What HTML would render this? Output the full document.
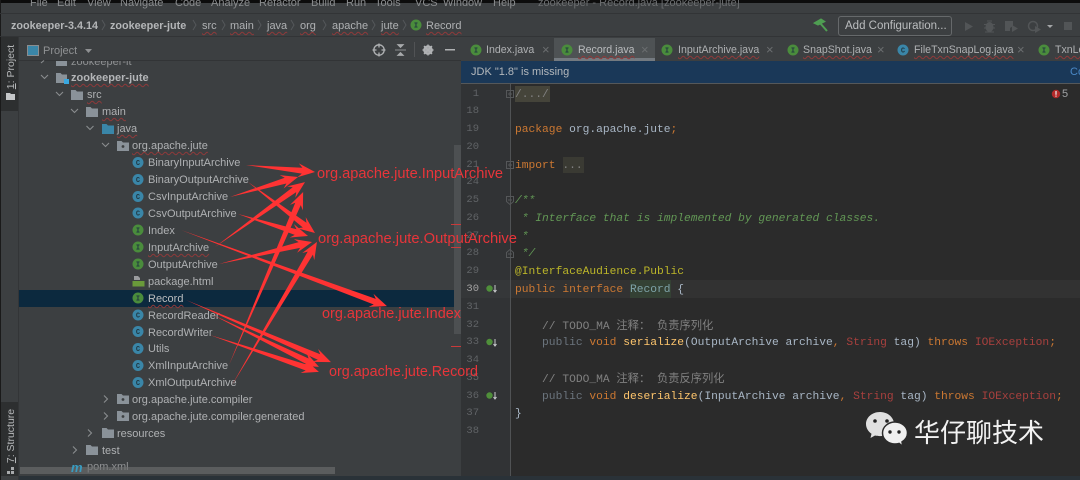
<!DOCTYPE html>
<html lang="zh">
<head>
<meta charset="utf-8">
<title>Record.java</title>
<style>
html,body{margin:0;padding:0;width:1080px;height:480px;overflow:hidden;background:#3c3f41}
#r{position:relative;width:1080px;height:480px;overflow:hidden;background:#3c3f41;font-family:"Liberation Sans","Noto Sans CJK SC",sans-serif;font-size:11px;color:#afb1b3;filter:blur(.35px)}
.b{position:absolute}
.t{position:absolute;white-space:nowrap;line-height:16px;height:16px;margin-top:1px}
.w{text-decoration:underline wavy #8f3a3a 1px;text-underline-offset:2px}
.bd{font-weight:bold}
.m{position:absolute;white-space:pre;line-height:18px;height:18px;left:515px;margin-top:1px;font-family:"Liberation Mono","Noto Sans CJK SC",monospace;font-size:11.27px;color:#a9b7c6}
.n{position:absolute;left:462px;width:17px;text-align:right;line-height:16px;font-family:"Liberation Mono",monospace;font-size:10.5px;color:#606366}
.k{color:#cc7832}.d{color:#6b747d}.h{color:#808080}.j{color:#629755;font-style:italic}.e{color:#a8403e}.f{color:#ffc66d}.a{color:#bbb529}
svg{position:absolute;left:0;top:0}
.c{fill:#3a86a8}.i{fill:#4a8c3c}
.l{font:bold 7px "Liberation Mono",monospace;text-anchor:middle;fill:#1f3640}
.ch{fill:none;stroke:#8a8d8f;stroke-width:1.1}
.cb{fill:none;stroke:#55585a;stroke-width:1}
.fo{fill:#8a9299}
.ar{fill:#ff3333}
.lb{font-family:"Liberation Sans",sans-serif;font-size:14.5px;fill:#e8353a}
.g{fill:#525557}
.x{position:absolute;font-size:13px;line-height:16px;color:#6b6e70;margin-top:1px}
.tb{font-size:10.6px}
</style>
</head>
<body>
<div id="r">
  <!-- first tree row is clipped by the tool header -->
  <div class="t" style="left:71px;top:53px;color:#8f9193">zookeeper-it</div>
  <div class="b" style="left:19px;top:37px;width:442px;height:23px;background:#3c3f41"></div>

  <!-- frame -->
  <div class="b" style="left:0;top:0;width:1080px;height:3px;background:#0c0c0c"></div>
  <div class="b" style="left:0;top:0;width:1px;height:480px;background:#1a1a1a"></div>
  <div class="b" style="left:0;top:13px;width:1080px;height:1px;background:#323436"></div>
  <div class="b" style="left:0;top:36px;width:1080px;height:1px;background:#323436"></div>

  <!-- menu -->
  <div class="t" style="left:30px;top:-6px;color:#8a8c8e">File</div>
  <div class="t" style="left:57px;top:-6px;color:#8a8c8e">Edit</div>
  <div class="t" style="left:87px;top:-6px;color:#8a8c8e">View</div>
  <div class="t" style="left:120px;top:-6px;color:#8a8c8e">Navigate</div>
  <div class="t" style="left:175px;top:-6px;color:#8a8c8e">Code</div>
  <div class="t" style="left:211px;top:-6px;color:#8a8c8e">Analyze</div>
  <div class="t" style="left:259px;top:-6px;color:#8a8c8e">Refactor</div>
  <div class="t" style="left:311px;top:-6px;color:#8a8c8e">Build</div>
  <div class="t" style="left:346px;top:-6px;color:#8a8c8e">Run</div>
  <div class="t" style="left:375px;top:-6px;color:#8a8c8e">Tools</div>
  <div class="t" style="left:415px;top:-6px;color:#8a8c8e">VCS</div>
  <div class="t" style="left:443px;top:-6px;color:#8a8c8e">Window</div>
  <div class="t" style="left:493px;top:-6px;color:#8a8c8e">Help</div>
  <div class="t" style="left:538px;top:-6px;color:#6c6e70">zookeeper - Record.java [zookeeper-jute]</div>

  <!-- breadcrumbs -->
  <div class="t bd" style="left:11px;top:17px;color:#b4b6b8;font-size:10.8px">zookeeper-3.4.14</div>
  <div class="t bd" style="left:110px;top:17px;color:#b4b6b8;font-size:10.8px">zookeeper-jute</div>
  <div class="t w" style="left:202px;top:17px">src</div>
  <div class="t w" style="left:230px;top:17px">main</div>
  <div class="t w" style="left:267px;top:17px">java</div>
  <div class="t w" style="left:300px;top:17px">org</div>
  <div class="t w" style="left:332px;top:17px">apache</div>
  <div class="t w" style="left:381px;top:17px">jute</div>
  <div class="t w" style="left:426px;top:17px">Record</div>

  <!-- add config -->
  <div class="b" style="left:838px;top:16px;width:112px;height:18px;border:1px solid #66696b;border-radius:3px"></div>
  <div class="t" style="left:845px;top:17px;color:#bbbdbf;font-size:11.5px">Add Configuration...</div>

  <!-- tool stripe -->
  <div class="b" style="left:1px;top:37px;width:17px;height:74px;background:#2d2f30"></div>
  <div class="b" style="left:1px;top:402px;width:17px;height:74px;background:#2d2f30"></div>
  <div class="b" style="left:18px;top:37px;width:1px;height:443px;background:#333537"></div>
  <div class="t" style="left:-14px;top:58px;width:50px;text-align:center;transform:rotate(-90deg);color:#b5b7b9;font-size:10.5px"><u>1</u>: Project</div>
  <div class="t" style="left:-19px;top:427px;width:60px;text-align:center;transform:rotate(-90deg);color:#b5b7b9;font-size:10.5px"><u>7</u>: Structure</div>

  <!-- tool header -->
  <div class="b" style="left:19px;top:60px;width:442px;height:1px;background:#323436"></div>
  <div class="t" style="left:43px;top:42px;color:#8f9193;font-size:11px">Project</div>

  <!-- selected row -->
  <div class="b" style="left:19px;top:290px;width:442px;height:17px;background:#0c293e"></div>

  <!-- tree text -->
  <div class="t bd w" style="left:71px;top:69px;color:#b4b6b8">zookeeper-jute</div>
  <div class="t w" style="left:87px;top:86px">src</div>
  <div class="t w" style="left:102px;top:103px">main</div>
  <div class="t w" style="left:117px;top:120px">java</div>
  <div class="t w" style="left:132px;top:137px">org.apache.jute</div>
  <div class="t" style="left:148px;top:154px">BinaryInputArchive</div>
  <div class="t" style="left:148px;top:171px">BinaryOutputArchive</div>
  <div class="t" style="left:148px;top:188px">CsvInputArchive</div>
  <div class="t" style="left:148px;top:205px">CsvOutputArchive</div>
  <div class="t" style="left:148px;top:222px">Index</div>
  <div class="t w" style="left:148px;top:239px">InputArchive</div>
  <div class="t" style="left:148px;top:256px">OutputArchive</div>
  <div class="t" style="left:148px;top:273px">package.html</div>
  <div class="t w" style="left:148px;top:290px;color:#bcbec0">Record</div>
  <div class="t" style="left:148px;top:307px">RecordReader</div>
  <div class="t" style="left:148px;top:324px">RecordWriter</div>
  <div class="t" style="left:148px;top:340px">Utils</div>
  <div class="t" style="left:148px;top:357px">XmlInputArchive</div>
  <div class="t" style="left:148px;top:374px">XmlOutputArchive</div>
  <div class="t" style="left:132px;top:391px">org.apache.jute.compiler</div>
  <div class="t" style="left:132px;top:408px">org.apache.jute.compiler.generated</div>
  <div class="t" style="left:117px;top:425px">resources</div>
  <div class="t" style="left:102px;top:442px">test</div>
  <div class="t" style="left:87px;top:458px;color:#8f9193">pom.xml</div>

  <!-- tabs -->
  <div class="b" style="left:461px;top:37px;width:619px;height:24px;background:#3c3f41"></div>
  <div class="b" style="left:554px;top:38px;width:101px;height:20px;background:#4e5254"></div>
  <div class="b" style="left:554px;top:58px;width:101px;height:3px;background:#747a80"></div>
  <div class="t tb" style="left:486px;top:41px">Index.java</div>
  <div class="x" style="left:542px;top:41px">×</div>
  <div class="t w tb" style="left:578px;top:41px;color:#bbbdbf">Record.java</div>
  <div class="x" style="left:641px;top:41px">×</div>
  <div class="t w tb" style="left:678px;top:41px">InputArchive.java</div>
  <div class="x" style="left:766px;top:41px">×</div>
  <div class="t w tb" style="left:803px;top:41px">SnapShot.java</div>
  <div class="x" style="left:877px;top:41px">×</div>
  <div class="t w tb" style="left:914px;top:41px">FileTxnSnapLog.java</div>
  <div class="x" style="left:1017px;top:41px">×</div>
  <div class="t w tb" style="left:1055px;top:41px">TxnLog.java</div>

  <!-- notification -->
  <div class="b" style="left:461px;top:61px;width:619px;height:22px;background:#1a3858"></div>
  <div class="b" style="left:461px;top:83px;width:619px;height:1px;background:#55585a"></div>
  <div class="t" style="left:471px;top:63px;color:#b4b8bc;font-size:11px">JDK "1.8" is missing</div>
  <div class="t" style="left:1070px;top:63px;color:#4a88c7;font-size:11px">Co</div>

  <!-- editor -->
  <div class="b" style="left:461px;top:84px;width:49px;height:392px;background:#313335"></div>
  <div class="b" style="left:510px;top:84px;width:1px;height:392px;background:#505254"></div>
  <div class="b" style="left:511px;top:84px;width:569px;height:392px;background:#2b2b2b"></div>
  <div class="b" style="left:511px;top:280px;width:569px;height:18px;background:#323232"></div>
  <div class="b" style="left:461px;top:280px;width:49px;height:18px;background:#353739"></div>
  <div class="b" style="left:515px;top:86px;width:35px;height:16px;background:#45443a"></div>
  <div class="b" style="left:563px;top:157px;width:21px;height:16px;background:#3a3a33"></div>
  <div class="b" style="left:630px;top:280px;width:41px;height:18px;background:#344134"></div>

  <!-- scrollbars -->
  <div class="b" style="left:454px;top:145px;width:7px;height:189px;background:#4d5052"></div>
  <div class="b" style="left:20px;top:467px;width:315px;height:7px;background:rgba(112,113,114,.6)"></div>
  <div class="b" style="left:19px;top:476px;width:1061px;height:4px;background:#2a3238"></div>

  <!-- line numbers -->
  <div class="n" style="top:86px">1</div>
  <div class="n" style="top:103px">18</div>
  <div class="n" style="top:121px">19</div>
  <div class="n" style="top:139px">20</div>
  <div class="n" style="top:157px">21</div>
  <div class="n" style="top:174px">24</div>
  <div class="n" style="top:192px">25</div>
  <div class="n" style="top:210px">26</div>
  <div class="n" style="top:228px">27</div>
  <div class="n" style="top:245px">28</div>
  <div class="n" style="top:263px">29</div>
  <div class="n" style="top:281px;color:#a4a3a3">30</div>
  <div class="n" style="top:299px">31</div>
  <div class="n" style="top:317px">32</div>
  <div class="n" style="top:334px">33</div>
  <div class="n" style="top:352px">34</div>
  <div class="n" style="top:370px">35</div>
  <div class="n" style="top:388px">36</div>
  <div class="n" style="top:405px">37</div>
  <div class="n" style="top:423px">38</div>

  <!-- code -->
  <div class="m h" style="top:85px">/.../</div>
  <div class="m" style="top:120px"><span class="k">package</span> org.apache.jute<span class="k">;</span></div>
  <div class="m" style="top:156px"><span class="k">import</span> <span class="h">...</span></div>
  <div class="m j" style="top:191px">/**</div>
  <div class="m j" style="top:209px"> * Interface that is implemented by generated classes.</div>
  <div class="m j" style="top:227px"> *</div>
  <div class="m j" style="top:244px"> */</div>
  <div class="m a" style="top:262px">@InterfaceAudience.Public</div>
  <div class="m" style="top:280px"><span class="k">public interface</span> <span style="color:#7ea3a8">Record</span> {</div>
  <div class="m h" style="top:317px">    // TODO_MA 注释： 负责序列化</div>
  <div class="m" style="top:333px">    <span class="d">public</span> <span class="k">void</span> <span class="f">serialize</span>(OutputArchive archive<span class="k">,</span> <span class="e">String</span> tag) <span class="k">throws</span> <span class="e">IOException</span><span class="k">;</span></div>
  <div class="m h" style="top:370px">    // TODO_MA 注释： 负责反序列化</div>
  <div class="m" style="top:387px">    <span class="d">public</span> <span class="k">void</span> <span class="f">deserialize</span>(InputArchive archive<span class="k">,</span> <span class="e">String</span> tag) <span class="k">throws</span> <span class="e">IOException</span><span class="k">;</span></div>
  <div class="m" style="top:404px">}</div>

  <div class="t" style="left:1062px;top:85px;color:#a0a2a4;font-size:11px">5</div>

  <!-- icons and arrows -->
  <svg width="1080" height="480" viewBox="0 0 1080 480">
    <!-- tool stripe icons -->
    <path d="M6 93h4l1 1h4V100H6z" fill="#c4c6c8"/>
    <path d="M7 471h3v3H7zM11 471h3v3h-3zM11 467h3v3h-3z" fill="#a8aaac"/>

    <!-- project header -->
    <rect x="27.500" y="45.500" width="11" height="10" fill="#3a86a8" stroke="#8a8d8f"/>
    <path d="M85 49h7l-3.500 4z" fill="#8f9193"/>
    <circle cx="379" cy="50" r="5.200" fill="none" stroke="#b0b2b4" stroke-width="1.300"/>
    <path d="M379 43.500v4M379 52.500v4M372.500 50h4M381.500 50h4" stroke="#b0b2b4" stroke-width="1.300"/>
    <path d="M395 50h11M397.500 44.500h6l-3 3zM397.500 55.500h6l-3-3z" fill="#a8aaac" stroke="#a8aaac" stroke-width=".8"/>
    <rect x="414" y="42" width="1" height="15" fill="#515355"/>
    <circle cx="428" cy="50" r="3.600" fill="none" stroke="#b0b2b4" stroke-width="2.400"/>
    <path d="M428 44.500v11M422.500 50h11M424 46l8 8M432 46l-8 8" stroke="#b0b2b4" stroke-width="1.400"/>
    <rect x="445" y="49" width="10" height="1.500" fill="#b0b2b4"/>

    <!-- breadcrumb chevrons -->
    <path class="cb" d="M102 20l3 5-3 5M193 20l3 5-3 5M222 20l3 5-3 5M258 20l3 5-3 5M291 20l3 5-3 5M323 20l3 5-3 5M372 20l3 5-3 5M403 20l3 5-3 5"/>
    <circle cx="416" cy="25" r="5.500" class="i"/><text x="416" y="27.500" class="l">I</text>

    <!-- toolbar -->
    <path d="M815 23l6-3.500 3 2-6 3zM820 23l7 8" fill="#4f9e52" stroke="#4f9e52" stroke-width="2"/>
    <path d="M965 22l8 4.500-8 4.500z" class="g"/>
    <ellipse cx="989.500" cy="27" rx="4" ry="5" class="g"/><path d="M984 24.500h11M984 28h11M985 32h9M987 21h5" stroke="#525557"/>
    <path d="M1005 21h8v5l-3 2v3h-5z" class="g"/><path d="M1012 25l6 3.500-6 3.500z" class="g"/>
    <circle cx="1033" cy="26" r="4.500" fill="none" stroke="#525557" stroke-width="1.500"/><path d="M1035 26l6 3.500-6 3.500z" class="g"/>
    <path d="M1047 25h6l-3 3z" fill="#a4a6a8"/>
    <rect x="1064" y="22" width="8" height="8" class="g"/>

    <!-- tab icons -->
    <circle cx="476" cy="50" r="5.500" class="i"/><text x="476" y="52.500" class="l">I</text>
    <circle cx="567" cy="50" r="5.500" class="i"/><text x="567" y="52.500" class="l">I</text>
    <circle cx="667" cy="50" r="5.500" class="i"/><text x="667" y="52.500" class="l">I</text>
    <circle cx="793" cy="50" r="5.500" class="i"/><text x="793" y="52.500" class="l">I</text>
    <circle cx="903" cy="50" r="5.500" class="c"/><text x="903" y="52.500" class="l">C</text>
    <circle cx="1044" cy="50" r="5.500" class="i"/><text x="1044" y="52.500" class="l">I</text>

    <!-- tree chevrons -->
    <path class="ch" d="M41 63l3-2.500M41 75l3.500 3.500 3.500-3.500M56 92l3.500 3.500 3.500-3.500M71 109l3.500 3.500 3.500-3.500M86.500 126l3.500 3.500 3.500-3.500M102 143l3.500 3.500 3.500-3.500"/>
    <path class="ch" d="M104 395.500l3.500 3.500-3.500 3.500M104 412.500l3.500 3.500-3.500 3.500M88 429.500l3.500 3.500-3.500 3.500M73 446.500l3.500 3.500-3.500 3.500"/>

    <!-- folders -->
    <rect x="56" y="61" width="11" height="5" class="fo"/>
    <path d="M56 73h4.500l1.500 1.500h5V83H56z" class="fo"/><rect x="64" y="79" width="5" height="5" fill="#3aa8e0"/>
    <path d="M71 90h4.500l1.500 1.500h6V100H71z" class="fo"/>
    <path d="M86 107h4.500l1.500 1.500h6V117H86z" class="fo"/>
    <path d="M102 124h4.500l1.500 1.500h6V134H102z" fill="#3a86a8"/>
    <path d="M117 141h4.500l1.500 1.500h6V151H117z" class="fo"/><circle cx="123" cy="146.500" r="1.400" fill="#3c3f41"/>
    <path d="M117 394h4.500l1.500 1.500h6V404H117z" class="fo"/><circle cx="123" cy="399.500" r="1.400" fill="#3c3f41"/>
    <path d="M117 411h4.500l1.500 1.500h6V421H117z" class="fo"/><circle cx="123" cy="416.500" r="1.400" fill="#3c3f41"/>
    <path d="M102 428h4.500l1.500 1.500h6V438H102z" class="fo"/>
    <path d="M86 445h4.500l1.500 1.500h6V455H86z" class="fo"/>
    <text x="71" y="472" style="font:italic bold 13px 'Liberation Sans',sans-serif;fill:#3a9cc0">m</text>

    <!-- class icons -->
    <circle cx="138" cy="162.500" r="5.500" class="c"/><text x="138" y="165" class="l">C</text>
    <circle cx="138" cy="179.500" r="5.500" class="c"/><text x="138" y="182" class="l">C</text>
    <circle cx="138" cy="196.500" r="5.500" class="c"/><text x="138" y="199" class="l">C</text>
    <circle cx="138" cy="213" r="5.500" class="c"/><text x="138" y="215.500" class="l">C</text>
    <circle cx="138" cy="230" r="5.500" class="i"/><text x="138" y="232.500" class="l">I</text>
    <circle cx="138" cy="247" r="5.500" class="i"/><text x="138" y="249.500" class="l">I</text>
    <circle cx="138" cy="264" r="5.500" class="i"/><text x="138" y="266.500" class="l">I</text>
    <path d="M134 276h4l2 2v2h-6z" fill="#9a9c9e"/><rect x="132.500" y="281" width="12" height="5.500" fill="#6a9a3a"/>
    <circle cx="138" cy="298" r="5.500" class="i"/><text x="138" y="300.500" class="l">I</text>
    <circle cx="138" cy="315" r="5.500" class="c"/><text x="138" y="317.500" class="l">C</text>
    <circle cx="138" cy="331.500" r="5.500" class="c"/><text x="138" y="334" class="l">C</text>
    <circle cx="138" cy="348.500" r="5.500" class="c"/><text x="138" y="351" class="l">C</text>
    <circle cx="138" cy="365.500" r="5.500" class="c"/><text x="138" y="368" class="l">C</text>
    <circle cx="138" cy="382.500" r="5.500" class="c"/><text x="138" y="385" class="l">C</text>

    <!-- gutter marks -->
    <g fill="none" stroke="#555759"><rect x="506.500" y="90.500" width="7" height="7"/><path d="M508 94h4M510 92v4"/>
      <rect x="506.500" y="161.500" width="7" height="7"/><path d="M508 165h4M510 163v4"/>
      <path d="M506.500 196.500h7v5l-3.500 3-3.500-3zM508 200h4"/>
      <path d="M506.500 257.500h7v-5l-3.500-3-3.500 3zM508 254h4"/></g>
    <circle cx="489.500" cy="288.500" r="3.200" fill="#4f8f3a"/><path d="M495 285v6M493.500 290l1.500 2 1.500-2" stroke="#c8cacc" fill="none"/>
    <circle cx="489.500" cy="342" r="3.200" fill="#4f8f3a"/><path d="M495 339v6M493.500 344l1.500 2 1.500-2" stroke="#c8cacc" fill="none"/>
    <circle cx="489.500" cy="395.500" r="3.200" fill="#4f8f3a"/><path d="M495 392v6M493.500 397l1.500 2 1.500-2" stroke="#c8cacc" fill="none"/>

    <!-- error -->
    <circle cx="1056" cy="94" r="4.200" fill="#b32a2a"/><rect x="1055.400" y="91" width="1.200" height="3.800" fill="#eee"/><rect x="1055.400" y="95.500" width="1.200" height="1.200" fill="#eee"/>

    <!-- small red marks -->
    <rect x="451" y="224" width="10" height="1" fill="#c93a3a"/>
    <rect x="451" y="247" width="10" height="1" fill="#c93a3a"/>
    <rect x="451" y="346" width="10" height="1" fill="#c93a3a"/>

    <!-- arrows: thin tail widening to a large head -->
    <g class="ar">
      <polygon transform="translate(246 165) rotate(5.800)" points="0,0 56.400,-3 52.400,-7 69.400,0 52.400,7 56.400,3"/>
      <polygon transform="translate(248 182) rotate(37.300)" points="0,0 71.200,-3 67.200,-7 84.200,0 67.200,7 71.200,3"/>
      <polygon transform="translate(230 197) rotate(-16.400)" points="0,0 57.900,-3 53.900,-7 70.900,0 53.900,7 57.900,3"/>
      <polygon transform="translate(238 214) rotate(17.400)" points="0,0 60.400,-3 56.400,-7 73.400,0 56.400,7 60.400,3"/>
      <polygon transform="translate(215 247) rotate(-35.800)" points="0,0 98,-3 94,-7 111,0 94,7 98,3"/>
      <polygon transform="translate(219 264) rotate(-13.300)" points="0,0 82.600,-3 78.600,-7 95.600,0 78.600,7 82.600,3"/>
      <polygon transform="translate(181 230) rotate(20.300)" points="0,0 206.600,-3 202.600,-7 219.600,0 202.600,7 206.600,3"/>
      <polygon transform="translate(229 365) rotate(-66.800)" points="0,0 175.200,-3 171.200,-7 188.200,0 171.200,7 175.200,3"/>
      <polygon transform="translate(232 385) rotate(-59.300)" points="0,0 153.400,-3 149.400,-7 166.400,0 149.400,7 153.400,3"/>
      <polygon transform="translate(186 300) rotate(23.200)" points="0,0 144.700,-3 140.700,-7 157.700,0 140.700,7 144.700,3"/>
      <polygon transform="translate(213 315) rotate(26.100)" points="0,0 105,-3 101,-7 118,0 101,7 105,3"/>
      <polygon transform="translate(210 335) rotate(18.700)" points="0,0 102,-3 98,-7 115,0 98,7 102,3"/>
    </g>

    <!-- red labels -->
    <text class="lb" x="317" y="178" textLength="186" lengthAdjust="spacingAndGlyphs">org.apache.jute.InputArchive</text>
    <text class="lb" x="318" y="243" textLength="199" lengthAdjust="spacingAndGlyphs">org.apache.jute.OutputArchive</text>
    <text class="lb" x="322" y="318" textLength="139" lengthAdjust="spacingAndGlyphs">org.apache.jute.Index</text>
    <text class="lb" x="329" y="376" textLength="149" lengthAdjust="spacingAndGlyphs">org.apache.jute.Record</text>

    <!-- wechat logo -->
    <path d="M880 412c-8 0-14 5.500-14 12 0 4 2.200 7.500 5.500 9.700l-1 4.300 4.500-2.500c1.600.4 3.200.6 5 .6 8 0 14-5.500 14-12s-6-12.100-14-12.100z" fill="#e0e0e0"/>
    <path d="M895 422c-7 0-12.500 5-12.500 11s5.500 11 12.500 11c1.400 0 2.800-.2 4-.6l3.800 3.100-.8-4.600c3.300-2 5.500-5.300 5.500-8.900 0-6-5.500-11-12.500-11z" fill="#efefef" stroke="#2b2b2b" stroke-width="1.500"/>
    <circle cx="875" cy="421" r="1.800" fill="#222"/><circle cx="887" cy="421" r="1.800" fill="#222"/>
    <circle cx="890" cy="432" r="1.700" fill="#222"/><circle cx="899" cy="432" r="1.700" fill="#222"/>
  </svg>

  <div class="t" style="left:914px;top:415px;height:32px;line-height:32px;font-size:26px;color:#f2f2f2;font-family:'Noto Sans CJK SC',sans-serif">华仔聊技术</div>
</div>
</body>
</html>
